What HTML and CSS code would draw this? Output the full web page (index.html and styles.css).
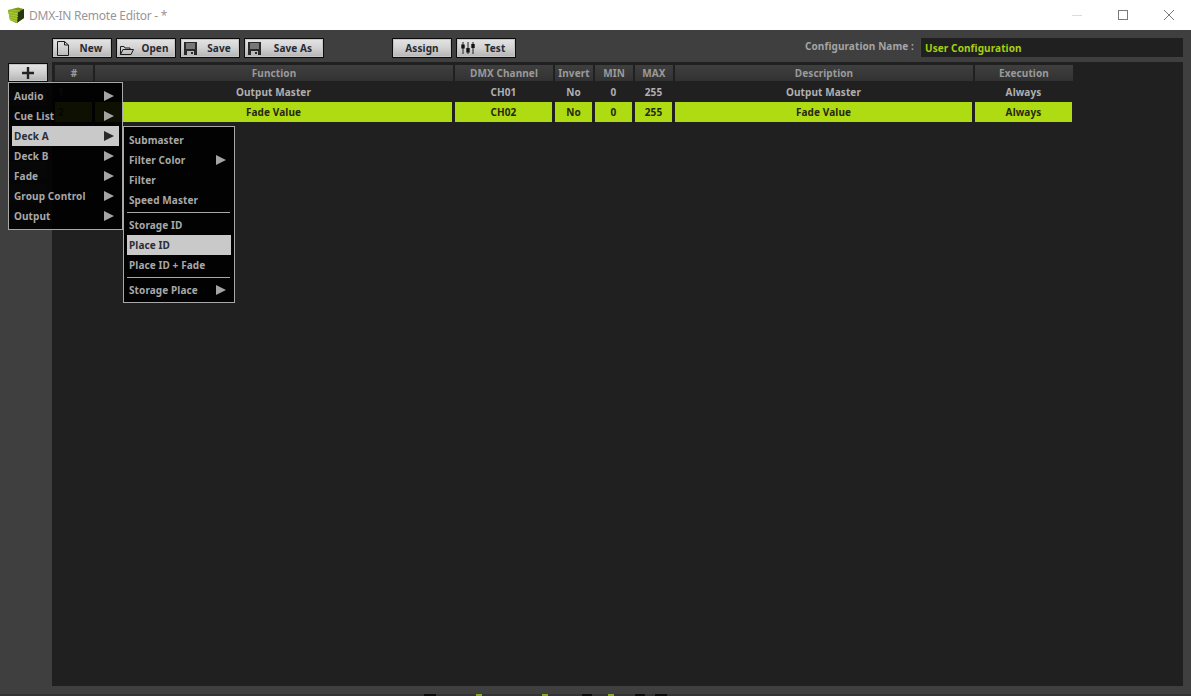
FILE: index.html
```html
<!DOCTYPE html>
<html lang="en">
<head>
<meta charset="utf-8">
<title>DMX-IN Remote Editor</title>
<link rel="stylesheet" href="styles.css">
</head>
<body>
<div class="window">
  <header class="titlebar">
    <svg class="logo" width="16" height="16" viewBox="0 0 16 16">
      <polygon points="0,3 10,0.5 16,2 16,11 8,16 2,13" fill="#7d9a1c"/>
      <polygon points="0,3 10,5 9,16 2,13" fill="#8fb321"/>
      <polygon points="10,5 16,2 16,11 9,16" fill="#2b3510"/>
      <path d="M0.5 5 10 7M1 7.5 10 9.5M1.2 10 9.6 12M1.6 12.3 9.4 14.4M2 2.8 12 4.2" stroke="#b4d43c" stroke-width=".8" fill="none"/>
    </svg>
    <span class="title">DMX-IN Remote Editor - *</span>
    <div class="controls">
      <svg class="ctl" width="10" height="10" viewBox="0 0 10 10"><path d="M0 5.5H10" stroke="#dcdcdc"/></svg>
      <svg class="ctl" width="10" height="10" viewBox="0 0 10 10"><rect x=".5" y=".5" width="9" height="9" fill="none" stroke="#7a7a7a"/></svg>
      <svg class="ctl" width="10" height="10" viewBox="0 0 10 10"><path d="M0 0 10 10M10 0 0 10" stroke="#7a7a7a" fill="none"/></svg>
    </div>
  </header>

  <div class="main">
    <div class="toolbar">
      <button class="btn w60">
        <svg class="ico" width="14" height="16" viewBox="0 0 14 16"><path d="M.5 1.500H7.500L11.500 5V15.500H.5Z M7.500 1.500V5H11.500" fill="none" stroke="#1c1c1c" stroke-width="1"/></svg>
        <span class="btn-label">New</span>
      </button>
      <button class="btn w60">
        <svg class="ico shift" width="15" height="14" viewBox="0 0 15 14"><path d="M.5 13.500V5.500H4L5 7H10V8.500M.5 13.500 3 8.500H13.500L11 13.500Z" fill="none" stroke="#1c1c1c"/></svg>
        <span class="btn-label">Open</span>
      </button>
      <button class="btn w60">
        <svg class="ico shift" width="15" height="15" viewBox="0 0 15 15"><rect x="0" y="1" width="13" height="13" fill="#2a2a2a"/><rect x="2" y="2" width="9" height="6" fill="#777"/><rect x="3" y="10" width="7" height="4" fill="#bbb"/><rect x="7" y="11" width="2" height="2" fill="#2a2a2a"/></svg>
        <span class="btn-label">Save</span>
      </button>
      <button class="btn w80">
        <svg class="ico shift" width="15" height="15" viewBox="0 0 15 15"><rect x="0" y="1" width="13" height="13" fill="#2a2a2a"/><rect x="2" y="2" width="9" height="6" fill="#777"/><rect x="3" y="10" width="7" height="4" fill="#bbb"/><rect x="7" y="11" width="2" height="2" fill="#2a2a2a"/></svg>
        <span class="btn-label">Save As</span>
      </button>
      <button class="btn w60 assign"><span class="btn-label">Assign</span></button>
      <button class="btn w60">
        <svg class="ico" width="14" height="14" viewBox="0 0 14 14"><path d="M2 1V13M7 1V13M12 1V13" stroke="#222"/><path d="M2 3.500V7.500M7 7V11.500M12 3V7" stroke="#111" stroke-width="3.400"/></svg>
        <span class="btn-label">Test</span>
      </button>
      <span class="config-label">Configuration Name :</span>
      <div class="config-input">User Configuration</div>
    </div>

    <div class="workspace">
      <aside class="sidebar">
        <button class="btn plus" aria-label="Add">
          <svg width="14" height="14" viewBox="0 0 14 14"><path d="M7 1V13M1 7H13" stroke="#222" stroke-width="2.400"/></svg>
        </button>
        <div class="side-tool first"></div>
        <div class="side-tool second"></div>
        <div class="side-tool third"></div>
      </aside>
      <section class="panel">
        <div class="grid">
          <div class="head">#</div>
          <div class="head">Function</div>
          <div class="head">DMX Channel</div>
          <div class="head">Invert</div>
          <div class="head">MIN</div>
          <div class="head">MAX</div>
          <div class="head">Description</div>
          <div class="head">Execution</div>

          <div class="cell num">1</div>
          <div class="cell">Output Master</div>
          <div class="cell">CH01</div>
          <div class="cell">No</div>
          <div class="cell">0</div>
          <div class="cell">255</div>
          <div class="cell">Output Master</div>
          <div class="cell">Always</div>

          <div class="cell num sel">2</div>
          <div class="cell sel">Fade Value</div>
          <div class="cell sel">CH02</div>
          <div class="cell sel">No</div>
          <div class="cell sel">0</div>
          <div class="cell sel">255</div>
          <div class="cell sel">Fade Value</div>
          <div class="cell sel">Always</div>
        </div>
      </section>
    </div>

    <div class="taskstrip">
      <i></i><b class="k"></b><i></i><b class="g"></b><i></i><b class="g"></b><i></i><b class="k"></b><i></i><b class="g"></b><i></i><b class="k"></b><i></i><b class="k"></b>
    </div>
  </div>

  <nav class="menu menu-main">
    <div class="item"><span>Audio</span><em class="arrow"></em></div>
    <div class="item"><span>Cue List</span><em class="arrow"></em></div>
    <div class="item active"><span>Deck A</span><em class="arrow"></em></div>
    <div class="item"><span>Deck B</span><em class="arrow"></em></div>
    <div class="item"><span>Fade</span><em class="arrow"></em></div>
    <div class="item"><span>Group Control</span><em class="arrow"></em></div>
    <div class="item"><span>Output</span><em class="arrow"></em></div>
  </nav>

  <nav class="menu menu-sub">
    <div class="item"><span>Submaster</span></div>
    <div class="item"><span>Filter Color</span><em class="arrow"></em></div>
    <div class="item"><span>Filter</span></div>
    <div class="item"><span>Speed Master</span></div>
    <div class="sep"></div>
    <div class="item"><span>Storage ID</span></div>
    <div class="item active"><span>Place ID</span></div>
    <div class="item"><span>Place ID + Fade</span></div>
    <div class="sep"></div>
    <div class="item"><span>Storage Place</span><em class="arrow"></em></div>
  </nav>
</div>
</body>
</html>
```

FILE: styles.css
```css
* { box-sizing: border-box; }
html, body { margin: 0; padding: 0; }
body {
  width: 1191px;
  height: 696px;
  overflow: hidden;
  font-family: "Noto Sans", "Open Sans", sans-serif;
}
.window {
  position: relative;
  width: 1191px;
  height: 696px;
  display: flex;
  flex-direction: column;
  background: #3f3f3f;
}
.titlebar {
  flex: 0 0 30px;
  height: 30px;
  background: #fff;
  display: flex;
  align-items: center;
  padding-left: 8px;
}
.logo { flex: none; margin-right: 5px; }
.title {
  font-size: 12px;
  color: #9b9499;
  letter-spacing: -.25px;
}
.controls {
  margin-left: auto;
  display: flex;
  gap: 36px;
  padding-right: 17px;
}
.ctl { display: block; }

.main {
  flex: 1;
  display: flex;
  flex-direction: column;
  min-height: 0;
  font-size: 10px;
  font-weight: 700;
  letter-spacing: .1px;
}
.toolbar {
  flex: 0 0 32px;
  display: flex;
  align-items: flex-start;
  padding: 8px 8px 0 52px;
  gap: 4px;
}
.btn {
  height: 20px;
  padding: 0 0 0 4px;
  margin: 0;
  display: flex;
  align-items: center;
  border: 1px solid #0c0c0c;
  outline: 0;
  background: linear-gradient(#e4e4e4, #d4d4d4 45%, #b4b4b4);
  box-shadow: inset 0 0 0 1px #c4c4c4;
  color: #262a33;
  font: inherit;
  letter-spacing: inherit;
  cursor: default;
}
.w60 { width: 60px; }
.w80 { width: 80px; }
.assign { margin-left: 64px; }
.ico { flex: none; display: block; }
.shift { margin-left: -1px; }
.btn-label { flex: 1; text-align: center; line-height: 18px; }
.assign .btn-label { padding-right: 4px; }
.config-label {
  margin-left: auto;
  color: #a4a4a4;
  line-height: 17px;
  margin-right: 2px;
}
.config-input {
  width: 263px;
  height: 19px;
  background: #202020;
  color: #a6cf12;
  padding-left: 4px;
  line-height: 21px;
  border-left: 1px solid #444;
}

.workspace {
  flex: 1;
  display: flex;
  min-height: 0;
  padding-right: 8px;
}
.sidebar {
  flex: 0 0 52px;
  padding: 1px 4px 0 8px;
  display: flex;
  flex-direction: column;
}
.plus {
  width: 40px;
  height: 19px;
  justify-content: center;
  padding: 0;
  flex: none;
}
.side-tool {
  width: 38px;
  height: 18px;
  margin-left: 1px;
  background: #5a5a5a;
}
.first { margin-top: 5px; }
.second { margin-top: 56px; }
.third { margin-top: 5px; }

.panel {
  flex: 1;
  background: #202020;
  padding: 3px 0 0 3px;
}
.grid {
  display: grid;
  grid-template-columns: 38px 358px 98px 38px 38px 38px 298px 98px;
  grid-auto-rows: 20px;
  column-gap: 2px;
  width: 1018px;
}
.head {
  height: 16px;
  background: linear-gradient(#3f3f3f, #323232);
  color: #9a9a9a;
  text-align: center;
  line-height: 16px;
  white-space: nowrap;
}
.head:nth-child(-n+8) { margin-bottom: -3px; }
.cell {
  margin-right: 1px;
  color: #b0b0b0;
  text-align: center;
  line-height: 20px;
  white-space: nowrap;
}
.head ~ .cell { position: relative; top: -3px; }
.num { text-align: left; padding-left: 3px; color: #666; }
.sel {
  background: #afdb13;
  color: #26280f;
}
.num.sel { color: #3c4a10; }

.taskstrip {
  flex: 0 0 2px;
  margin-top: 8px;
  background: #333;
  display: flex;
}
.taskstrip i { display: block; }
.taskstrip i:nth-child(1) { width: 424px; }
.taskstrip b:nth-child(2) { width: 12px; }
.taskstrip i:nth-child(3) { width: 40px; }
.taskstrip b:nth-child(4) { width: 6px; }
.taskstrip i:nth-child(5) { width: 60px; }
.taskstrip b:nth-child(6) { width: 6px; }
.taskstrip i:nth-child(7) { width: 34px; }
.taskstrip b:nth-child(8) { width: 10px; }
.taskstrip i:nth-child(9) { width: 16px; }
.taskstrip b:nth-child(10) { width: 6px; }
.taskstrip i:nth-child(11) { width: 21px; }
.taskstrip b:nth-child(12) { width: 10px; }
.taskstrip i:nth-child(13) { width: 10px; }
.taskstrip b:nth-child(14) { width: 12px; }
.k { display: block; background: #0a0a0a; }
.g { display: block; background: #8aa82a; }

.menu {
  position: absolute;
  background: rgba(0, 0, 0, .92);
  border: 1px solid #a8a8a8;
  font-size: 10px;
  font-weight: 700;
  letter-spacing: .1px;
  color: #a8a8a8;
}
.menu-main {
  left: 8px;
  top: 82px;
  width: 115px;
  height: 148px;
  padding: 3px;
}
.menu-sub {
  left: 123px;
  top: 126px;
  width: 112px;
  height: 177px;
  padding: 3px;
}
.item {
  height: 20px;
  display: flex;
  align-items: center;
  padding-left: 2px;
  white-space: nowrap;
}
.item.active {
  background: #c9c9c9;
  color: #2a2e38;
}
.arrow {
  display: block;
  margin-left: auto;
  margin-right: 5px;
  width: 0;
  height: 0;
  border-style: solid;
  border-width: 5.500px 0 5.500px 10px;
  border-color: transparent transparent transparent #a4a4a4;
}
.item.active .arrow { border-left-color: #2a2a2a; }
.sep {
  height: 5px;
  padding-top: 2px;
  margin: 0 1px 0 0;
}
.sep::before {
  content: "";
  display: block;
  height: 1px;
  background: #a8a8a8;
}
```
